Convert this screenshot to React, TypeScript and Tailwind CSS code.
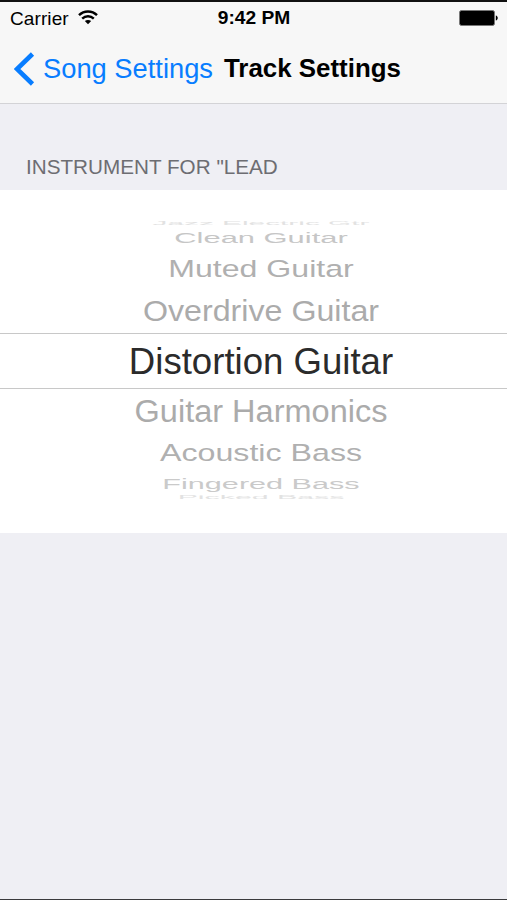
import React from 'react';

interface WheelItem {
  label: string;
  row: string;
  text: string;
}

const above: WheelItem[] = [
  { label: 'Jazz Electric Gtr', row: 'h-[5px]', text: 'text-[29.8px] text-[#e2e2e2] scale-y-[0.2]' },
  { label: 'Clean Guitar', row: 'h-[26px]', text: 'text-[30.9px] text-[#c6c6c6] scale-y-[0.5]' },
  { label: 'Muted Guitar', row: 'h-[36px] pt-[1px]', text: 'text-[32.1px] text-[#b0b0b0] scale-y-[0.74]' },
  { label: 'Overdrive Guitar', row: 'h-[46px] pt-[3px]', text: 'text-[32.2px] text-[#ababab] scale-y-[0.94]' },
];

const below: WheelItem[] = [
  { label: 'Guitar Harmonics', row: 'h-[43px] pt-[3px]', text: 'text-[32.5px] text-[#ababab] scale-y-[0.94]' },
  { label: 'Acoustic Bass', row: 'h-[41px] pt-[2px]', text: 'text-[32.2px] text-[#b0b0b0] scale-y-[0.74]' },
  { label: 'Fingered Bass', row: 'h-[20px]', text: 'text-[30.6px] text-[#cacaca] scale-y-[0.5]' },
  { label: 'Picked Bass', row: 'h-[9px]', text: 'text-[30.3px] text-[#e2e2e2] scale-y-[0.2]' },
];

const WheelRow: React.FC<{ item: WheelItem }> = ({ item }) => (
  <div className={`flex w-full shrink-0 items-center justify-center ${item.row}`}>
    <span className={`shrink-0 whitespace-nowrap leading-none ${item.text}`}>{item.label}</span>
  </div>
);

const StatusBar = () => (
  <div className="grid h-8 grid-cols-3 items-center pl-[10px] pr-[9px] text-[19px] leading-none">
    <div className="flex items-center gap-[9px]">
      <span className="tracking-[0.1px]">Carrier</span>
      <svg className="-mt-[2px]" width="20" height="15" viewBox="0 0 20 15" fill="none" stroke="#000" strokeWidth="2.4">
        <path d="M1 5.2C6 .2 14 .2 19 5.2" />
        <path d="M4.2 8.6C7.5 5.4 12.5 5.4 15.8 8.6" />
        <path d="M10 14.3L6.8 11.1C8.6 9.5 11.4 9.5 13.2 11.1Z" fill="#000" stroke="none" />
      </svg>
    </div>
    <span className="text-center text-[19.2px] font-bold">9:42 PM</span>
    <svg className="justify-self-end" width="39" height="16" viewBox="0 0 39 16">
      <rect x="0.5" y="0.5" width="35" height="15" rx="2" fill="#000" stroke="#777" />
      <path d="M36.8 5.5C39.4 6 39.4 10 36.8 10.5Z" fill="#000" />
    </svg>
  </div>
);

const NavBar = () => (
  <div className="flex h-[69px] items-center pl-[14px]">
    <button className="flex items-center gap-[8px] text-[27.3px] leading-none text-[#087dff]">
      <svg width="21" height="34" viewBox="0 0 21 34" fill="none" stroke="#087dff" strokeWidth="4.6">
        <path d="M18.5 2L3 17L18.5 32" />
      </svg>
      <span className="whitespace-nowrap">Song Settings</span>
    </button>
    <h1 className="ml-[11px] whitespace-nowrap text-[25.9px] font-bold leading-none">Track Settings</h1>
  </div>
);

export default function App() {
  return (
    <div className="flex h-[900px] w-[507px] flex-col overflow-hidden border-b border-t-2 border-b-[#3a3a3c] border-t-[#111] bg-[#efeff4] font-['Liberation_Sans',Arial,sans-serif] text-black">
      <header className="h-[102px] shrink-0 border-b border-[#d3d3d6] bg-[#f7f7f7]">
        <StatusBar />
        <NavBar />
      </header>

      <h2 className="flex h-[86px] shrink-0 items-end pb-[12px] pl-[26px] text-[20.7px] leading-none text-[#6d6d72]">
        INSTRUMENT FOR "LEAD
      </h2>

      <div className="flex h-[343px] shrink-0 flex-col overflow-hidden bg-white pt-[30px]">
        <div className="flex flex-col pl-[15px]">
          {above.map(item => (
            <WheelRow key={item.label} item={item} />
          ))}
        </div>
        <div className="flex h-[56px] shrink-0 items-center justify-center border-y border-[#c8c8c8] pl-[15px] pt-[2px] text-[36.6px] leading-none text-[#2b2b2b]">
          Distortion Guitar
        </div>
        <div className="flex flex-col pl-[15px]">
          {below.map(item => (
            <WheelRow key={item.label} item={item} />
          ))}
        </div>
      </div>
    </div>
  );
}
